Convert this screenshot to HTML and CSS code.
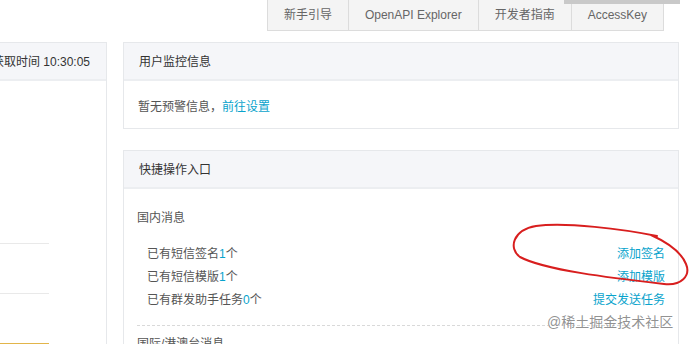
FILE: index.html
```html
<!DOCTYPE html>
<html lang="zh-CN">
<head>
  <meta charset="UTF-8" />
  <title>短信服务概览</title>
  <link rel="stylesheet" href="styles.css">
</head>
<body>

<!-- 顶部快捷入口 -->
<div class="topbar">
  <div class="tabs">
    <a class="tab">新手引导</a>
    <a class="tab">OpenAPI Explorer</a>
    <a class="tab">开发者指南</a>
    <a class="tab">AccessKey</a>
  </div>
</div>
<div class="hover-bar"></div>

<div class="main">
  <!-- 左侧数据 -->
  <div class="col-left">
    <div class="panel panel-left">
      <div class="panel-hd hd-right"><span>数据获取时间 10:30:05</span></div>
      <div class="left-body">
        <div class="stat"></div>
        <div class="stat"></div>
        <div class="stat-bar"></div>
      </div>
    </div>
  </div>

  <!-- 右侧信息 -->
  <div class="col-right">
    <div class="panel">
      <div class="panel-hd">用户监控信息</div>
      <div class="panel-bd">暂无预警信息，<a class="link">前往设置</a></div>
    </div>

    <div class="panel panel-quick">
      <div class="panel-hd">快捷操作入口</div>
      <div class="quick-bd">
        <div class="group-title">国内消息</div>
        <div class="rows">
          <div class="row"><span>已有短信签名<em>1</em>个</span><a class="link">添加签名</a></div>
          <div class="row"><span>已有短信模版<em>1</em>个</span><a class="link">添加模版</a></div>
          <div class="row"><span>已有群发助手任务<em>0</em>个</span><a class="link">提交发送任务</a></div>
        </div>
        <div class="divider"></div>
        <div class="group-title">国际/港澳台消息</div>
      </div>
    </div>
  </div>
</div>

<!-- 截图上的手绘标注和水印 -->
<svg class="mark" viewBox="0 0 689 344" width="689" height="344">
  <path d="M657 236 C622 229 566 222 536 226 C513 230 508 248 520 257 C544 270 612 278 664 284 C681 286 691 276 686 264 C682 254 671 244 651 235"
        fill="none" stroke="#d81e1e" stroke-width="2" stroke-linecap="round"/>
</svg>
<div class="watermark">@稀土掘金技术社区</div>

</body>
</html>
```

FILE: styles.css
```css
body {
  margin: 0;
  width: 689px;
  height: 344px;
  overflow: hidden;
  background-color: #fff;
  font-family: 'Liberation Sans', 'Noto Sans CJK SC', sans-serif;
  font-size: 12px;
  color: #555;
  position: relative;
}

a {
  text-decoration: none;
  cursor: pointer;
}

.topbar {
  display: flex;
  justify-content: flex-end;
  padding-right: 25px;
  height: 31px;
}

.tabs {
  display: flex;
}

.tab {
  display: flex;
  align-items: center;
  height: 30px;
  padding: 0 16px;
  background-color: #f4f4f4;
  border: 1px solid #dcdcdc;
  border-top: none;
  border-right: none;
  color: #666;
  line-height: 16px;
}

.tab:last-child {
  border-right: 1px solid #dcdcdc;
}

.hover-bar {
  position: absolute;
  left: 564px;
  top: 0;
  width: 116px;
  height: 4px;
  background-color: #c9c9c9;
}

.main {
  display: flex;
  gap: 16px;
  padding-top: 11px;
}

.col-left {
  width: 107px;
  flex-shrink: 0;
}

.col-right {
  width: 556px;
  display: flex;
  flex-direction: column;
  gap: 21px;
}

.panel {
  border: 1px solid #e6e8eb;
  background-color: #fff;
}

.panel-left {
  border-left: none;
  height: 400px;
}

.panel-hd {
  height: 33px;
  padding-top: 3px;
  line-height: 33px;
  padding-left: 15px;
  background-color: #f5f6f9;
  border-bottom: 2px solid #eceef1;
  color: #333;
}

.hd-right {
  display: flex;
  justify-content: flex-end;
  padding-left: 0;
  padding-right: 16px;
  white-space: nowrap;
}

.left-body {
  padding-top: 113px;
}

.stat {
  width: 49px;
  height: 49px;
  border-bottom: 1px solid #e9e9e9;
}

.stat-bar {
  width: 49px;
  height: 49px;
  border-bottom: 2px solid #e2b54a;
}

.panel-bd {
  padding: 18px 14px 13px;
  line-height: 16px;
}

.link {
  color: #08a3cc;
}

.quick-bd {
  padding: 21px 13px 0;
  line-height: 16px;
}

.group-title {
  color: #555;
}

.rows {
  margin-top: 17px;
  padding-left: 10px;
}

.row {
  display: flex;
  justify-content: space-between;
  line-height: 23px;
}

.row em {
  font-style: normal;
  color: #08a3cc;
}

.divider {
  margin: 13px 0 10px;
  border-top: 1px dashed #d9d9d9;
}

.mark {
  position: absolute;
  left: 0;
  top: 0;
  pointer-events: none;
}

.watermark {
  position: absolute;
  left: 547px;
  top: 313px;
  font-size: 14px;
  line-height: 18px;
  color: rgba(110, 110, 110, 0.75);
  text-shadow: 0 0 1px #fff;
  pointer-events: none;
  white-space: nowrap;
}
```
